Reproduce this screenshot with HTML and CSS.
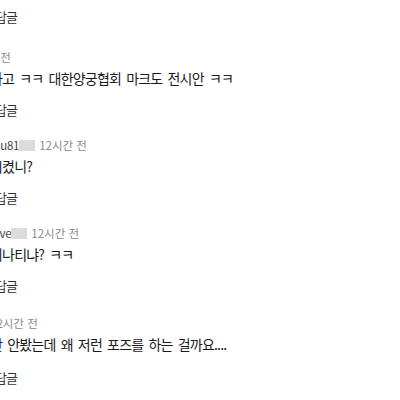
FILE: index.html
```html
<!DOCTYPE html>
<html lang="ko">
<head>
<meta charset="utf-8">
<title>댓글</title>
<link rel="stylesheet" href="styles.css">
</head>
<body>
<div class="comments">
	<div class="comment tail">
		<div class="reply">답글</div>
	</div>

	<div class="comment first">
		<div class="meta"><span class="time early">12시간 전</span></div>
		<div class="text">하고 ㅋㅋ 대한양궁협회 마크도 전시안 ㅋㅋ</div>
		<div class="reply">답글</div>
	</div>

	<div class="comment">
		<div class="meta"><span class="name">mu81</span><span class="mask"></span><span class="time">12시간 전</span></div>
		<div class="text">시켰니?</div>
		<div class="reply">답글</div>
	</div>

	<div class="comment">
		<div class="meta"><span class="name">love</span><span class="mask"></span><span class="time">12시간 전</span></div>
		<div class="text">니나티냐? ㅋㅋ</div>
		<div class="reply">답글</div>
	</div>

	<div class="comment last">
		<div class="meta"><span class="time">12시간 전</span></div>
		<div class="text">난 안봤는데 왜 저런 포즈를 하는 걸까요....</div>
		<div class="reply">답글</div>
	</div>
</div>
</body>
</html>
```

FILE: styles.css
```css
body {
	margin: 0;
	background: #fff;
	font-family: "Noto Sans CJK KR", "Malgun Gothic", sans-serif;
	overflow: hidden;
}

.comments {
	margin-left: -10px;
	padding-top: 7px;
	white-space: nowrap;
}

.comment {
	margin-top: 15px;
}

.comment.tail {
	margin-top: 0;
}

.comment.first {
	margin-top: 20px;
}

.comment.last {
	margin-top: 17px;
}

.meta {
	display: flex;
	align-items: center;
	height: 20px;
	font-size: 11.5px;
	color: #8a8a8a;
}

.meta .name {
	color: #444;
	letter-spacing: -0.3px;
}

.meta .mask {
	display: inline-block;
	width: 16px;
	height: 11px;
	margin: 0 4px 0 0;
	background: #dcdcdc;
}

.meta .time.early {
	margin-left: -27px;
}

.text {
	margin-top: 1px;
	line-height: 20px;
	font-size: 14px;
	letter-spacing: -0.8px;
	word-spacing: 2px;
	color: #1a1a1a;
}

.reply {
	margin-top: 12px;
	padding-left: 5px;
	line-height: 20px;
	font-size: 13px;
	letter-spacing: -1px;
	color: #333;
}

.comment.tail .reply {
	margin-top: 0;
}

.comment.last .reply {
	margin-top: 14px;
}
```
